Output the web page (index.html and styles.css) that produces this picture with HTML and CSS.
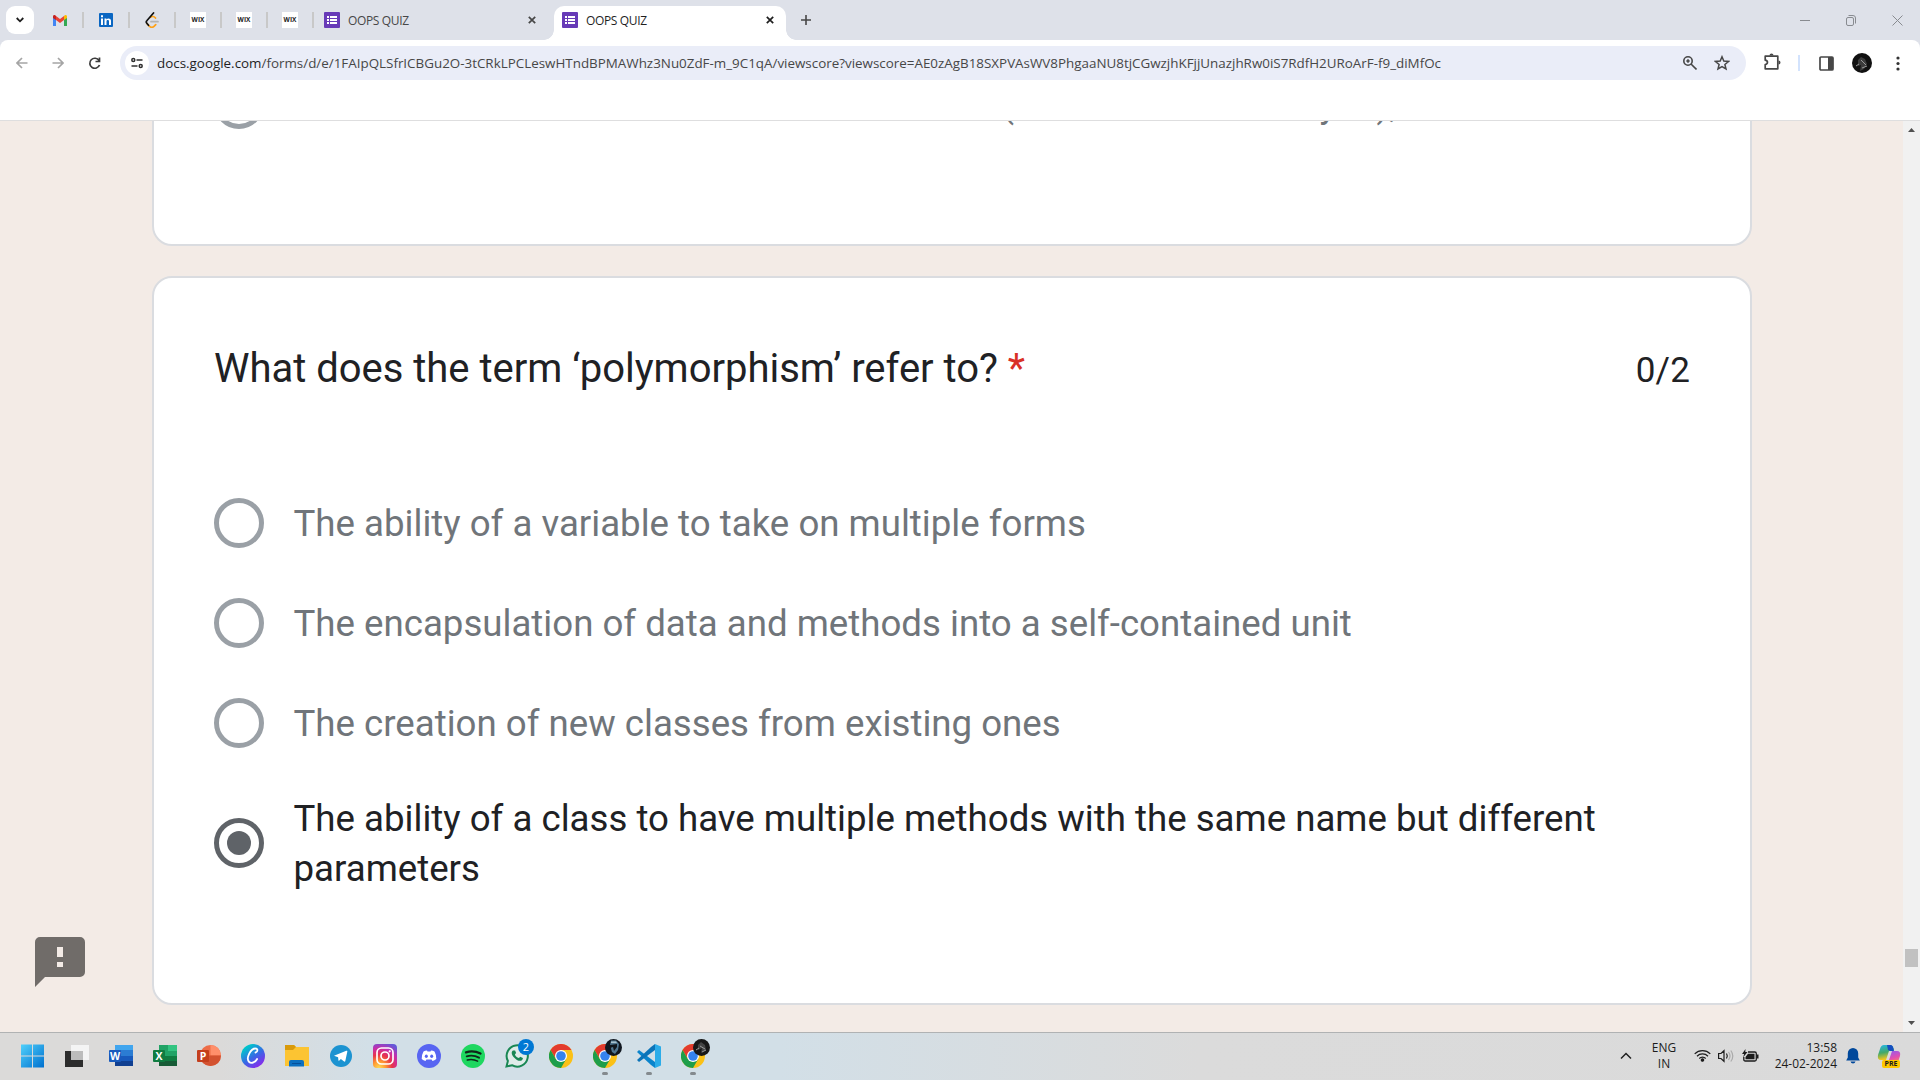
FILE: index.html
```html
<!DOCTYPE html>
<html lang="en">
<head>
<meta charset="utf-8">
<title>OOPS QUIZ</title>
<link rel="stylesheet" href="styles.css">
</head>
<body>
<svg class="defs" width="0" height="0" aria-hidden="true">
  <defs>
    <symbol id="forms" viewBox="0 0 16 16"><rect width="16" height="16" rx="1" fill="#673ab7"/><path d="M3 4h2v2H3zM6 4h7v2H6zM3 7h2v2H3zM6 7h7v2H6zM3 10h2v2H3zM6 10h7v2H6z" fill="#fff"/></symbol>
    <symbol id="close" viewBox="0 0 8 8"><path d="M.8.8l6.400 6.400M7.200.8L.8 7.200" stroke="currentColor" stroke-width="1.700" fill="none"/></symbol>
    <symbol id="chrome" viewBox="0 0 24 24"><circle cx="12" cy="12" r="12" fill="#fbc116"/><path d="M1.600 6A12 12 0 0 1 22.400 6H12l-5 9z" fill="#e33b2e"/><path d="M1.600 6A12 12 0 0 0 12 24l5.200-9L12 17.500 6.800 15z" fill="#1e9e4a"/><circle cx="12" cy="12" r="6" fill="#fff"/><circle cx="12" cy="12" r="4.800" fill="#3583ee"/></symbol>
  </defs>
</svg>
<header class="tabs">
  <div class="tab-search"><svg width="8" height="6" viewBox="0 0 8 6"><path d="M.7 1l3.300 3.300L7.300 1" fill="none" stroke="#1f1f1f" stroke-width="1.800"/></svg></div>
  <div class="pins">
    <span class="pin"><svg width="14" height="11" viewBox="0 0 14 11"><path d="M0 1.500V11h3V4z" fill="#4285f4"/><path d="M14 1.500V11h-3V4z" fill="#34a853"/><path d="M3 1l4 3 4-3v4L7 8 3 5z" fill="#ea4335"/><path d="M0 1.500C0 0 2-.5 3 1v4L0 3z" fill="#c5221f"/><path d="M14 1.500C14 0 12-.5 11 1v4l3-2z" fill="#fbbc04"/></svg></span>
    <span class="pin"><svg width="14" height="14" viewBox="0 0 14 14"><rect width="14" height="14" rx="1" fill="#0a66c2"/><path d="M2 5.500h2V12H2zM2 2.300h2v2H2zM5.500 5.500h1.900v.9C8.500 4.800 12 5 12 7.800V12h-2V8.400c0-1.900-2.500-1.800-2.500 0V12h-2z" fill="#fff"/></svg></span>
    <span class="pin"><svg width="14" height="16" viewBox="0 0 14 16" fill="none" stroke-width="1.700" stroke-linecap="round"><path d="M5.500 5.300C7 4 9 4.200 10.500 6M2 11.500l2.300 2.600c1.500 1.500 3.500 1.500 5 0l1.400-1.400" stroke="#ffa116"/><path d="M8.500 1L2 8.500c-1 1-1 2 0 3l1.500 1.800" stroke="#111"/><path d="M6 9.700h7" stroke="#b3b3b3"/></svg></span>
    <span class="pin"><b class="wix">WIX</b></span>
    <span class="pin"><b class="wix">WIX</b></span>
    <span class="pin"><b class="wix">WIX</b></span>
  </div>
  <div class="tab"><svg width="16" height="16"><use href="#forms"/></svg><span>OOPS QUIZ</span><svg width="8" height="8"><use href="#close"/></svg></div>
  <div class="tab active"><svg width="16" height="16"><use href="#forms"/></svg><span>OOPS QUIZ</span><svg width="8" height="8"><use href="#close"/></svg></div>
  <svg class="plus" width="10" height="10" viewBox="0 0 10 10"><path d="M5 0v10M0 5h10" stroke="#474747" stroke-width="1.600"/></svg>
  <div class="window-buttons">
    <svg width="10" height="11" viewBox="0 0 10 11"><path d="M0 5.500h10"/></svg>
    <svg width="10" height="11" viewBox="0 0 10 11"><rect x=".5" y="2.500" width="7" height="8" rx="1.500"/><path d="M2.500.5H7Q9.500.5 9.500 3v5.500"/></svg>
    <svg width="11" height="11" viewBox="0 0 11 11"><path d="M.5.5l10 10M10.500.5l-10 10"/></svg>
  </div>
</header>
<nav class="toolbar">
  <div class="nav-icons">
    <svg width="12" height="12" viewBox="0 0 12 12" stroke="#a5a5a5"><path d="M11.500 6H1M6 1L1 6l5 5"/></svg>
    <svg width="12" height="12" viewBox="0 0 12 12" stroke="#a5a5a5"><path d="M.5 6H11M6 1l5 5-5 5"/></svg>
    <svg width="13" height="13" viewBox="0 0 13 13" stroke="#3c3c3c"><path d="M11 3.500A5 5 0 1 0 11.500 8M11.500.5V4.500H7.500"/></svg>
  </div>
  <div class="omnibox">
    <span class="site"><svg width="12" height="12" viewBox="0 0 12 12" fill="none" stroke="#303030" stroke-width="1.500"><circle cx="2.300" cy="3" r="1.500"/><path d="M5.500 3H11.500M.5 9H6.500"/><circle cx="9.700" cy="9" r="1.500"/></svg></span>
    <span class="url"><span>docs.google.com</span>/forms/d/e/1FAIpQLSfrICBGu2O-3tCRkLPCLeswHTndBPMAWhz3Nu0ZdF-m_9C1qA/viewscore?viewscore=AE0zAgB18SXPVAsWV8PhgaaNU8tjCGwzjhKFjjUnazjhRw0iS7RdfH2URoArF-f9_diMfOc</span>
    <svg class="zoom" width="14" height="14" viewBox="0 0 14 14" fill="none" stroke="#474747" stroke-width="1.600"><circle cx="5" cy="5" r="4.200"/><path d="M8 8l5.500 5.500"/><path d="M5 3.300v3.400M3.300 5h3.400"/></svg>
    <svg class="star" width="16" height="16" viewBox="0 0 16 16" fill="none" stroke="#474747" stroke-width="1.500"><path d="M8 1.800l1.800 4.300 4.700.4-3.600 3 1.100 4.500L8 11.600 4 14l1.100-4.500-3.600-3 4.700-.4z"/></svg>
  </div>
  <svg class="puzzle" width="17" height="17" viewBox="0 0 17 17"><path d="M1.200 3.200h12.600v12.600H1.200v-4.200c3-.5 3-4 0-4.400z" fill="none" stroke="#474747" stroke-width="1.700" stroke-linejoin="round"/><path d="M5.500 2.500a2 2 0 0 1 4 0zM14.500 7.500a2 2 0 0 1 0 4z" fill="#474747"/></svg>
  <i class="divider"></i>
  <svg class="panel" width="15" height="15" viewBox="0 0 15 15"><rect x="1" y="1" width="13" height="13" rx="1" fill="none" stroke="#474747" stroke-width="1.700"/><path d="M9 1h5v13H9z" fill="#474747"/></svg>
  <svg class="avatar" width="20" height="20" viewBox="0 0 20 20"><circle cx="10" cy="10" r="10" fill="#111"/><path d="M6 7l3-3 4 2 2 5-3 5-4 2 1-6-3 1z" fill="#3c3c3c"/><path d="M9 7l5 5M4 13l3-2M10 15l5-2" stroke="#999"/></svg>
  <svg class="menu" width="4" height="15" viewBox="0 0 4 15" fill="#333"><circle cx="2" cy="2" r="1.600"/><circle cx="2" cy="7.500" r="1.600"/><circle cx="2" cy="13" r="1.600"/></svg>
</nav>
<main class="page">
  <div class="form">
    <section class="card previous">
      <div class="option"><i class="radio"></i><div class="tails"><span>(</span><span>y</span><span>),</span></div></div>
    </section>
    <section class="card question">
      <div class="heading"><h1>What does the term ‘polymorphism’ refer to? <em>*</em></h1><span class="score">0/2</span></div>
      <div class="options">
        <div class="option"><i class="radio"></i><span>The ability of a variable to take on multiple forms</span></div>
        <div class="option"><i class="radio"></i><span>The encapsulation of data and methods into a self-contained unit</span></div>
        <div class="option"><i class="radio"></i><span>The creation of new classes from existing ones</span></div>
        <div class="option chosen"><i class="radio"></i><span>The ability of a class to have multiple methods with the same name but different parameters</span></div>
      </div>
    </section>
  </div>
  <svg class="report" width="50" height="50" viewBox="0 0 50 50"><path d="M5 0h40a5 5 0 0 1 5 5v30a5 5 0 0 1-5 5H10L0 50V5a5 5 0 0 1 5-5z" fill="#706c69"/><path d="M22 10h6v10h-6zM22 25h6v5h-6z" fill="#f3ebe6"/></svg>
  <div class="scrollbar"><svg width="7" height="4"><path d="M0 4L3.500 0 7 4z" fill="#505050"/></svg><i></i><svg width="7" height="4"><path d="M0 0l3.500 4L7 0z" fill="#505050"/></svg></div>
</main>
<footer class="taskbar">
  <div class="apps">
    <svg viewBox="0 0 24 24"><defs><linearGradient id="win" x2="1" y2="1"><stop stop-color="#4fd0fb"/><stop offset="1" stop-color="#0070cf"/></linearGradient></defs><path d="M0 .5h11v11H0zM12 .5h11v11H12zM0 12.500h11v11H0zM12 12.500h11v11H12z" fill="url(#win)"/></svg>
    <svg viewBox="0 0 24 24"><path d="M0 7h18v16H0z" fill="#2c2c2c"/><path d="M6 1h18v15H6z" fill="#f4f4f4"/><path d="M6 7h12v9H6z" fill="#bcbcbc"/></svg>
    <svg viewBox="0 0 24 24"><path d="M6 1h18v6H6z" fill="#41a5ee"/><path d="M6 6h18v6H6z" fill="#2b7cd3"/><path d="M6 12h18v5H6z" fill="#185abd"/><path d="M6 17h18v5H6z" fill="#103f91"/><rect y="6" width="12" height="12" rx="1" fill="#185abd"/><text x="6" y="15.700" class="glyph">W</text></svg>
    <svg viewBox="0 0 24 24"><path d="M6 1h18v21H6z" fill="#21a366"/><path d="M15 1h9v6h-9z" fill="#33c481"/><path d="M6 12h18v10H6z" fill="#107c41"/><path d="M6 17h18v5H6z" fill="#185c37"/><rect y="6" width="12" height="12" rx="1" fill="#107c41"/><text x="6" y="15.700" class="glyph">X</text></svg>
    <svg viewBox="0 0 24 24"><circle cx="13.500" cy="11.500" r="10.500" fill="#ed6c47"/><path d="M13.500 1A10.500 10.500 0 0 1 24 11.500H13.500z" fill="#ff8f6b"/><path d="M3 11.500h21a10.500 10.500 0 0 1-21 0" fill="#d35230"/><rect y="6" width="12" height="12" rx="1" fill="#c43e1c"/><text x="6" y="15.700" class="glyph">P</text></svg>
    <svg viewBox="0 0 24 24"><defs><linearGradient id="canva" x2=".7" y2="1"><stop offset=".2" stop-color="#00c4cc"/><stop offset=".6" stop-color="#3769e5"/><stop offset="1" stop-color="#8b28ec"/></linearGradient></defs><circle cx="12" cy="12" r="12" fill="url(#canva)"/><path d="M14.500 8.500c2.500-.5 2.500-4 .2-4C9.500 4.300 4.500 14.500 8.200 18c2.300 2.100 6.300 0 7.900-3" fill="none" stroke="#fff" stroke-width="1.800" stroke-linecap="round"/></svg>
    <svg viewBox="0 0 24 24"><path d="M0 1h9l2 2h13v19H0z" fill="#fcc432"/><path d="M0 1h9l2 2-3 3H0z" fill="#d99a0a"/><path d="M4 22.500V18q0-2 2-2h11q2 0 2 2v4.500z" fill="#0d70c0"/><path d="M7 19.500h9" stroke="#07509a"/></svg>
    <svg viewBox="0 0 24 24"><circle cx="12" cy="12" r="11" fill="#1c93d1"/><path d="M5 11.700l12.300-4.900c.7-.3 1.200.1 1 1l-2 9.200c-.1.700-.7.800-1.200.5l-3.200-2.400-1.600 1.500c-.5.400-.9.200-.9-.4l-.3-3z" fill="#fff"/></svg>
    <svg viewBox="0 0 24 24"><defs><radialGradient id="ig" cx=".25" cy="1" r="1.100"><stop stop-color="#ffdc58"/><stop offset=".25" stop-color="#ff9a32"/><stop offset=".5" stop-color="#e8344a"/><stop offset=".75" stop-color="#c92caa"/><stop offset="1" stop-color="#6558d8"/></radialGradient></defs><rect width="24" height="24" rx="4" fill="url(#ig)"/><g fill="none" stroke="#fff" stroke-width="1.700"><rect x="4" y="4" width="16" height="16" rx="4.500"/><circle cx="12" cy="12" r="4"/></g><circle cx="16.700" cy="7.300" r="1.100" fill="#fff"/></svg>
    <svg viewBox="0 0 24 24"><circle cx="12" cy="12" r="12" fill="#5865f2"/><path d="M6.500 7.500Q8 6.500 10 6.500l.5 1h3l.5-1q2 0 3.500 1 2 3.500 1.800 7.500-1.800 1.600-3.800 2l-.9-1.500h-5.200L8.500 17q-2-.4-3.800-2Q4.500 11 6.500 7.500z" fill="#fff"/><ellipse cx="9.300" cy="12.300" rx="1.500" ry="1.700" fill="#5865f2"/><ellipse cx="14.700" cy="12.300" rx="1.500" ry="1.700" fill="#5865f2"/></svg>
    <svg viewBox="0 0 24 24"><circle cx="12" cy="12" r="12" fill="#1ed760"/><g fill="none" stroke="#10251a" stroke-linecap="round"><path d="M5 8.300Q12.500 6 19.500 9.500" stroke-width="2.300"/><path d="M5.700 12.300q6.500-1.800 12.300 1.400" stroke-width="1.900"/><path d="M6.300 16q5.500-1.400 10.300 1.200" stroke-width="1.500"/></g></svg>
    <span class="app"><svg viewBox="0 0 24 24"><path d="M1.500 22.500l1.400-5.500A10.600 10.600 0 1 1 7 21.200z" fill="#dfece9" stroke="#198754" stroke-width="2"/><path d="M8 6.500c-2 1.200-1.600 4 .8 6.700 2.700 3 5.800 4.400 7.800 3.200 1-.7 1.500-1.700 1.200-2.400l-2.500-1.300-1.400 1.400c-2-.7-3.300-2-4-3.700l1.200-1.400-1-2.500z" fill="#198754"/></svg><b class="count">2</b></span>
    <svg viewBox="0 0 24 24"><use href="#chrome"/></svg>
    <span class="app running"><svg viewBox="0 0 24 24"><use href="#chrome"/></svg><svg class="profile" viewBox="0 0 17 17"><circle cx="8.500" cy="8.500" r="8.500" fill="#111820"/><path d="M6 1.500h5l3 3.500-1 6-3 4-3-2-2-7z" fill="#50768f"/><path d="M5 6l7-1v3l-3 4-1-4-3 1z" fill="#10161c"/><path d="M6 2.500h5l1 1.500H6z" fill="#a9c3ce"/></svg></span>
    <span class="app running"><svg viewBox="0 0 24 24"><path d="M2 6l-2 2 14 13 4 3v-6z" fill="#0a84cc"/><path d="M2 18l-2-2L14 3l4-3v6z" fill="#0c74b8"/><path d="M18 0l6 2.500v19L18 24z" fill="#2bace9"/></svg></span>
    <span class="app running"><svg viewBox="0 0 24 24"><use href="#chrome"/></svg><svg class="profile" viewBox="0 0 17 17"><circle cx="8.500" cy="8.500" r="8.500" fill="#181818"/><path d="M5 6l3-3 4 3 1 5-5 3 1-5-4 2z" fill="#444"/><path d="M7 7l5 3M3 11l3-2M9 13l4-2" stroke="#999"/></svg></span>
  </div>
  <div class="tray">
    <svg width="12" height="8" viewBox="0 0 12 8"><path d="M1 6.500l5-5 5 5" fill="none" stroke="#222" stroke-width="1.500"/></svg>
    <div class="lang">ENG<br>IN</div>
    <svg class="wifi" width="17" height="13" viewBox="0 0 17 13" fill="none" stroke="#1c1c1c" stroke-width="1.200"><path d="M.7 4.800a11 11 0 0 1 15.600 0M3 7.200a7.800 7.800 0 0 1 11 0M5.300 9.500a4.500 4.500 0 0 1 6.400 0"/><circle cx="8.500" cy="11" r="1.200" fill="#1c1c1c"/></svg>
    <svg class="sound" width="17" height="14" viewBox="0 0 17 14" fill="none" stroke="#1c1c1c" stroke-width="1.200"><path d="M.6 4.500h2.400L6 1.700v10.600L3 9.500H.6zM8.500 4.500q1.600 2.500 0 5"/><path d="M10.500 3q3 4 0 8M12.800 1.500q4 5.500 0 11" stroke="#aaa"/></svg>
    <svg class="battery" width="17" height="13" viewBox="0 0 17 13"><path d="M6 3h6.800q1.500 0 1.500 1.500v6q0 1.500-1.500 1.500H3.300q-1.500 0-1.500-1.500V8" fill="none" stroke="#1c1c1c" stroke-width="1.300"/><path d="M6 4.800h6.500v5.500H3.500V8zM15 5.500h1.500v4H15zM3.500 0L0 5h2.200L1 8.500 5.500 3H3.300z" fill="#1c1c1c"/></svg>
    <div class="clock">13:58<br>24-02-2024</div>
    <svg class="bell" width="14" height="16" viewBox="0 0 14 16"><path d="M7 0a5.200 5.200 0 0 1 5.200 5.200V9.500L13.800 12.500H.2L1.800 9.500V5.200A5.200 5.200 0 0 1 7 0zM4.500 13.500h5Q9 15.500 7 15.500t-2.500-2z" fill="#00489b"/></svg>
    <div class="copilot"><svg width="24" height="22" viewBox="0 0 24 22"><defs><linearGradient id="cpa" x2=".2" y2="1"><stop stop-color="#25b8e8"/><stop offset=".55" stop-color="#42a86b"/><stop offset="1" stop-color="#f2c61c"/></linearGradient><linearGradient id="cpb" x2=".3" y2="1"><stop stop-color="#8b5cf5"/><stop offset=".6" stop-color="#e34fae"/><stop offset="1" stop-color="#ff8a54"/></linearGradient></defs><path d="M7 0h6q3 0 4 5l-5 1-3 9H4Q0 15 1 10l2-6q1-4 4-4z" fill="url(#cpa)"/><path d="M10 0h4q2 0 3 6h-4l-2-1z" fill="#164fc0"/><path d="M15 6h5q4 0 3 5l-2 6q-1 3-4 3H9q2-1 3-5z" fill="url(#cpb)"/></svg><b>PRE</b></div>
  </div>
</footer>
</body>
</html>
```
FILE: styles.css
```css
* { box-sizing: border-box; }
body { margin: 0; width: 1920px; height: 1080px; overflow: hidden; display: flex; flex-direction: column; background: #dee1e9; font-family: "Open Sans", "Noto Sans", sans-serif; }
svg { display: block; flex: none; }
.defs { position: absolute; }

.tabs { height: 40px; flex: none; display: flex; align-items: center; padding-left: 6px; }
.tab-search { width: 28px; height: 28px; border-radius: 9px; background: #fff; display: grid; place-items: center; }
.pins { display: flex; margin-left: 4px; }
.pin { width: 46px; height: 16px; border-right: 2px solid #c8c8c8; display: grid; place-items: center; }
.wix { width: 16px; height: 16px; background: #fff; font: 700 6.500px/16px "Open Sans", sans-serif; text-align: center; color: #222; }
.tab { width: 240px; height: 40px; padding: 0 18px 0 10px; display: flex; align-items: center; gap: 8px; color: #474747; font-size: 12px; }
.tab span { flex: 1; letter-spacing: -.35px; }
.tab.active { width: 232px; height: 34px; margin-top: 6px; padding: 0 12px 6px 8px; background: #fff; border-radius: 10px 10px 0 0; color: #1f1f1f; position: relative; }
.tab.active::before, .tab.active::after { content: ""; position: absolute; bottom: 0; width: 10px; height: 10px; }
.tab.active::before { left: -10px; background: radial-gradient(circle at 0 0, transparent 9.500px, #fff 10px); }
.tab.active::after { right: -10px; background: radial-gradient(circle at 100% 0, transparent 9.500px, #fff 10px); }
.plus { margin-left: 15px; }
.window-buttons { margin-left: auto; margin-right: 17px; display: flex; gap: 36px; fill: none; stroke: #888b90; stroke-width: 1; }

.toolbar { height: 81px; flex: none; display: flex; align-items: flex-start; border-bottom: 1px solid #dededf; border-radius: 8px 8px 0 0; background: #fff; padding-top: 6px; }
.nav-icons { width: 120px; height: 34px; display: flex; align-items: center; gap: 24px; padding-left: 16px; fill: none; stroke-width: 1.700; }
.omnibox { width: 1626px; height: 34px; border-radius: 17px; background: #eaedf8; display: flex; align-items: center; padding: 0 16px 0 5px; }
.site { width: 24px; height: 24px; border-radius: 12px; background: #fff; display: grid; place-items: center; }
.url { margin-left: 8px; flex: 1; white-space: nowrap; font-size: 13.400px; color: #474747; }
.url span { color: #1f1f1f; }
.zoom { margin-right: 17px; }
.puzzle { margin: 7px 0 0 18px; }
.divider { width: 2px; height: 16px; margin: 9px 0 0 17px; background: #d3e3fd; }
.panel { margin: 10px 0 0 19px; }
.avatar { margin: 7px 0 0 18px; }
.menu { margin: 10px 0 0 24px; }

.page { height: 911px; flex: none; display: flex; background: #f3ebe6; position: relative; overflow: hidden; }
.form { width: 1600px; margin-left: 152px; flex: none; font-family: Roboto, sans-serif; }
.card { background: #fff; border: 2px solid #dadce0; border-radius: 20px; padding: 0 60px; }
.previous { height: 175px; margin-top: -50px; margin-bottom: 30px; }
.question { height: 729px; padding-top: 60px; }
.heading { display: flex; justify-content: space-between; align-items: flex-start; height: 160px; }
h1 { margin: 0; padding-top: 1px; font-weight: 400; font-size: 40px; line-height: 60px; letter-spacing: -.02px; color: #202124; }
h1 em { font-style: normal; color: #d93025; }
.score { font-size: 35px; line-height: 65px; letter-spacing: .15px; color: #202124; }
.option { display: flex; align-items: center; gap: 29.500px; height: 100px; font-size: 36.650px; line-height: 50px; color: #70757a; }
.option > span, .tails { padding-top: 2px; }
.radio { width: 50px; height: 50px; flex: none; border: 5px solid #9aa0a6; border-radius: 50%; }
.options { margin-top: -25px; }
.chosen { height: 140px; color: #202124; }
.chosen .radio { border-color: #5f6368; display: grid; place-items: center; }
.chosen .radio::after { content: ""; width: 24px; height: 24px; border-radius: 50%; background: #5f6368; }
.previous .option { margin-top: -19px; }
/* last line of the scrolled-out answer: only the descenders reach the viewport */
.tails { display: grid; grid-template-columns: 300px 75px auto; padding-left: 708px; }
.tails span:nth-child(2) { padding-left: 18px; }
.report { position: absolute; left: 35px; top: 816px; }
.scrollbar { margin-left: auto; width: 17px; height: 911px; background: #f1f1f1; display: flex; flex-direction: column; align-items: center; padding: 7px 0; }
.scrollbar i { width: 13px; height: 18px; background: #c1c1c1; margin-top: 817px; margin-bottom: auto; }

.taskbar { height: 48px; flex: none; display: flex; justify-content: space-between; border-top: 1px solid #b0b2b3; padding-bottom: 2px; background: linear-gradient(90deg, #dbdad9 0, #dbdad9 220px, #d2dfe7 370px, #d2dfe7 780px, #dbdbdb 1200px, #dadada 100%); color: #1c1c1c; }
.apps { display: flex; align-items: center; gap: 20px; padding-left: 21px; }
.apps svg { width: 24px; height: 24px; }
.app { position: relative; width: 24px; height: 24px; }
.glyph { font: 700 10.500px "Open Sans", sans-serif; fill: #fff; text-anchor: middle; }
.count { position: absolute; left: 13px; top: -5px; width: 16px; height: 16px; border-radius: 8px; background: #0078d4; color: #fff; font: 400 11px/16px "Open Sans", sans-serif; text-align: center; }
.app .profile { position: absolute; left: 12px; top: -5px; width: 17px; height: 17px; }
.running::after { content: ""; position: absolute; left: 9px; top: 28px; width: 6px; height: 3px; border-radius: 2px; background: #848a8e; }
.tray { display: flex; align-items: center; font-size: 11.950px; line-height: 16px; }
.lang { width: 40px; margin-left: 12px; text-align: center; }
.wifi { margin-left: 10px; }
.sound { margin-left: 7px; }
.battery { margin-left: 7px; }
.clock { width: 78px; text-align: right; white-space: nowrap; }
.bell { margin-left: 9px; }
.copilot { position: relative; margin-left: 17px; margin-right: 19px; }
.copilot b { position: absolute; left: 5px; top: 15px; width: 18px; height: 8px; border-radius: 2px; background: #ffc800; font: 700 7px/8px "Open Sans", sans-serif; text-align: center; }
```
